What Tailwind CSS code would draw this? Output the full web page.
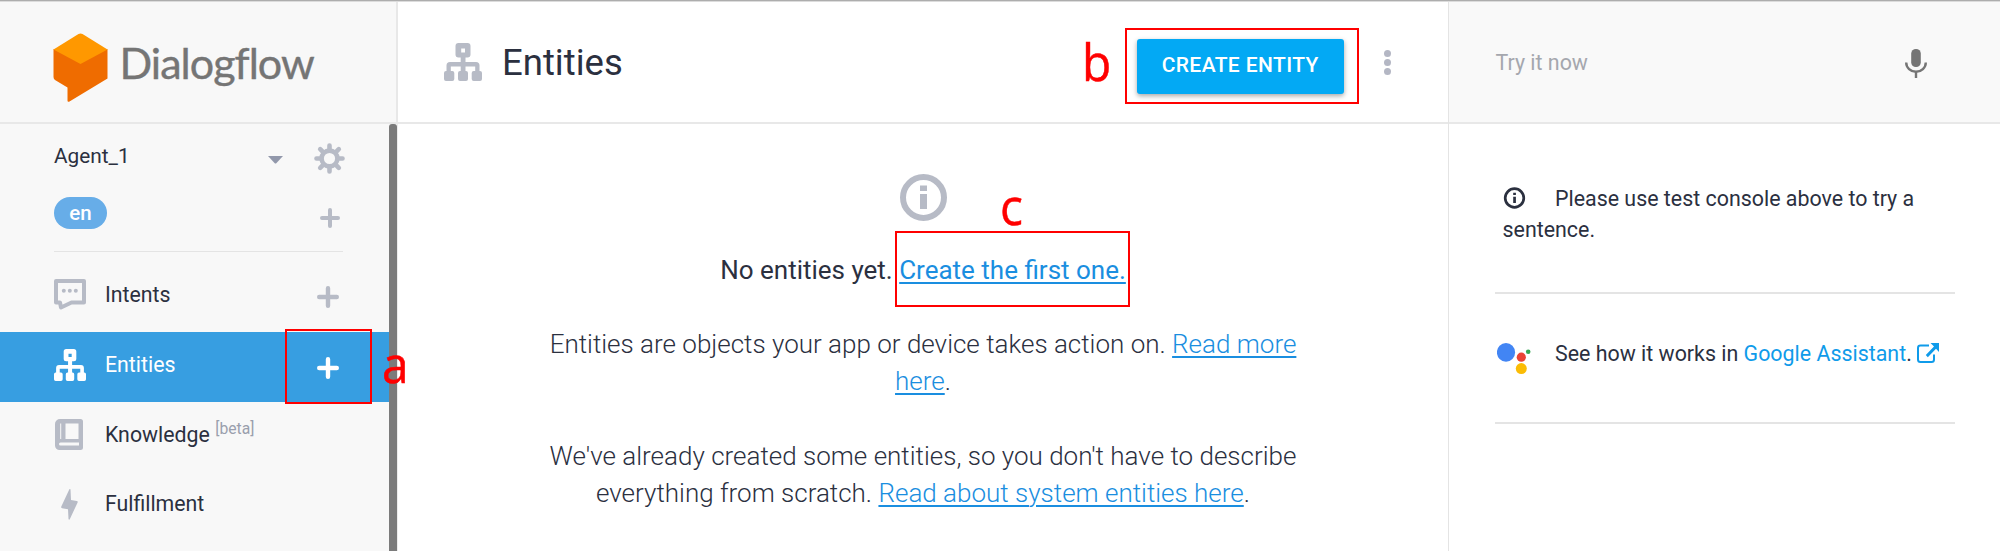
<!DOCTYPE html>
<html lang="en">
<head>
<meta charset="utf-8">
<title>Dialogflow</title>
<script src="https://cdn.jsdelivr.net/npm/@tailwindcss/browser@4"></script>
</head>
<body class="relative flex h-[551px] w-[2000px] flex-col overflow-hidden bg-white font-['Roboto',sans-serif] text-[21.3px] text-[#2b303f]">
<svg class="hidden">
  <symbol id="sitemap" viewBox="0 0 38 38">
    <path fill="currentColor" fill-rule="evenodd" d="M14.500 0h9a3 3 0 0 1 3 3v8.500a3 3 0 0 1-3 3h-2v4.500H32a3.500 3.500 0 0 1 3.500 3.500V28H36a2 2 0 0 1 2 2v6a2 2 0 0 1-2 2h-6.300a2 2 0 0 1-2-2v-6a2 2 0 0 1 2-2h1.500v-4.500h-9.700V28H22a2 2 0 0 1 2 2v6a2 2 0 0 1-2 2h-6a2 2 0 0 1-2-2v-6a2 2 0 0 1 2-2h.7v-4.500H6.800V28h1.500a2 2 0 0 1 2 2v6a2 2 0 0 1-2 2H2a2 2 0 0 1-2-2v-6a2 2 0 0 1 2-2h.5v-5.500A3.500 3.500 0 0 1 6 19h10.700v-4.500h-2.200a3 3 0 0 1-3-3V3a3 3 0 0 1 3-3zM17.200 5.500v4h3.800v-4z"/>
  </symbol>
  <symbol id="plus" viewBox="0 0 22 22"><path d="M11 2.200v17.600M2.200 11h17.600" stroke="currentColor" stroke-width="4.400" stroke-linecap="round" fill="none"/></symbol>
</svg>

<div class="h-px shrink-0 bg-[#adadad]"></div>
<div class="h-px shrink-0 bg-[#dcdcdc]"></div>

<div class="flex min-h-0 flex-1">
  <!-- Sidebar -->
  <aside class="flex w-[398px] shrink-0 flex-col bg-[#f8f8f8]">
    <div class="flex h-[122px] shrink-0 border-r-2 border-b-2 border-[#e8e8e8] pt-[31px] pl-[53px]">
      <svg class="h-[70px] w-[55px]" viewBox="0 0 55 70">
        <path d="M.5 16 27.500 26 54.500 16V45.500L16.500 68.500Q14.500 69.500 14.500 67.500V54.500L2 47Q.5 46 .5 44z" fill="#ef6c00"/>
        <path d="M.5 16.500 25.500 1Q27.500 0 29.500 1L54.500 16.500 27.500 31z" fill="#ff9800"/>
      </svg>
      <span class="mt-[4px] ml-[11.5px] font-['Lato',sans-serif] text-[43px] leading-[52px] tracking-[-0.95px] text-[#757575] [-webkit-text-stroke:0.4px_#757575]">Dialogflow</span>
    </div>
    <div class="flex min-h-0 flex-1">
      <nav class="flex w-[389px] shrink-0 flex-col">
        <div class="mr-[46px] ml-[54px] flex h-[128px] shrink-0 flex-col border-b-[1.5px] border-[#e4e4e4]">
          <div class="flex h-[66px] items-center">
            <span class="w-[214px] shrink-0 text-[20.8px]">Agent_1</span>
            <svg class="mt-[5px] h-[8px] w-[15px] shrink-0" viewBox="0 0 15 8"><path d="M0 0h15L8.500 7q-1 1-2 0z" fill="#9298ab"/></svg>
            <svg class="mt-[2px] ml-[31px] h-[31px] w-[31px] shrink-0" viewBox="-15.500 -15.500 31 31">
              <circle r="7.900" fill="none" stroke="#b7bbc6" stroke-width="4.600"/>
              <path d="M0-9v-4M0 9v4M-9 0h-4M9 0h4M6.600 6.600l2.700 2.700M-6.600-6.600l-2.700-2.700M6.600-6.600l2.700-2.700M-6.600 6.600l-2.700 2.700" stroke="#b7bbc6" stroke-width="4.600" stroke-linecap="round"/>
            </svg>
          </div>
          <div class="flex items-start justify-between pt-[7px]">
            <span class="flex h-[32px] w-[53px] items-center justify-center rounded-full bg-[#67ade8] text-[20.5px] font-medium text-white">en</span>
            <svg class="mt-[10.500px] mr-[3.500px] h-[20px] w-[20px] text-[#b7bbc6]"><use href="#plus"/></svg>
          </div>
        </div>
        <div class="mt-[10px] flex flex-col">
          <a class="flex h-[70px] items-center pr-[50px] pl-[54px]">
            <span class="flex flex-1 items-center pb-[5px]">
              <svg class="mr-[19px] h-[31px] w-[32px]" viewBox="0 0 32 31">
                <path d="M2 2h28v21.500H17.500L7 28.500l-1-5H2z" fill="none" stroke="#b7bbc6" stroke-width="4" stroke-linejoin="round"/>
                <circle cx="9.800" cy="11.800" r="2" fill="#b7bbc6"/><circle cx="15.800" cy="11.800" r="2" fill="#b7bbc6"/><circle cx="21.800" cy="11.800" r="2" fill="#b7bbc6"/>
              </svg>Intents</span>
            <svg class="h-[22px] w-[22px] text-[#b7bbc6]"><use href="#plus"/></svg>
          </a>
          <a class="flex h-[70px] items-center bg-[#379ee1] pr-[50px] pl-[54px] text-white">
            <span class="flex flex-1 items-center pb-[5px]"><svg class="mr-[19px] h-[32px] w-[32px]"><use href="#sitemap"/></svg>Entities</span>
            <svg class="mt-px h-[22px] w-[22px]"><use href="#plus"/></svg>
          </a>
          <a class="flex h-[70px] items-center pb-[5px] pl-[55px]">
            <svg class="mr-[22px] h-[31px] w-[28px]" viewBox="0 0 28 31">
              <path fill="#b7bbc6" fill-rule="evenodd" d="M5 0h20.500A2.500 2.500 0 0 1 28 2.500V28.500A2.500 2.500 0 0 1 25.500 31H4.500A4.500 4.500 0 0 1 0 26.500V5A5 5 0 0 1 5 0zM10.500 4.500V20h13V4.500zM5.200 4.500V20h1V4.500zM5.500 23.500a1.500 1.500 0 0 0 0 3H24v-3z"/>
            </svg>Knowledge<span class="ml-[5.5px] pb-[11px] text-[15.7px] leading-5 text-[#9a9fad]">[beta]</span>
          </a>
          <a class="flex h-[70px] items-center pb-[6px] pl-[61px]">
            <svg class="mr-[27px] h-[31px] w-[17px]" viewBox="0 0 17 31"><path d="M8.500 0 .3 17.500q-.6 1.500.8 1.700l5.900 1L7.500 30q.6 1.500 1.400 0l7.600-16.300q.7-1.500-.8-1.800l-5.700-.9L9.500.3z" fill="#b7bbc6"/></svg>Fulfillment
          </a>
        </div>
      </nav>
      <div class="w-[8px] rounded-t-[3px] bg-[#7b7b7b]"></div>
      <div class="w-px bg-[#ececec]"></div>
    </div>
  </aside>

  <!-- Main column -->
  <main class="flex w-[1050px] shrink-0 flex-col">
    <header class="flex h-[122px] shrink-0 items-center border-b-2 border-[#e8e8e8] pl-[45.5px]">
      <svg class="h-[38px] w-[38px] text-[#b7bbc6]"><use href="#sitemap"/></svg>
      <h1 class="ml-[20.5px] flex-1 pt-px text-[36.5px] leading-[44px]">Entities</h1>
      <button class="mt-[9px] mr-[40.5px] mb-px flex h-[55px] w-[206.5px] items-center justify-center self-center rounded-[3px] bg-[#03a9f4] pb-px text-[21px] font-medium tracking-[0.4px] text-white shadow-[0_2px_5px_rgba(0,0,0,0.35)]">CREATE ENTITY</button>
      <svg class="mr-[57px] h-[25px] w-[7px]" viewBox="0 0 7 25"><circle cx="3.500" cy="3.600" r="3.500" fill="#b4b7c4"/><circle cx="3.500" cy="12.500" r="3.500" fill="#b4b7c4"/><circle cx="3.500" cy="21.400" r="3.500" fill="#b4b7c4"/></svg>
    </header>
    <section class="flex flex-col items-center pt-[49.5px] text-center text-[26px] leading-[37px]">
      <svg class="h-[47px] w-[47px]" viewBox="0 0 47 47"><circle cx="23.500" cy="23.500" r="20.500" fill="none" stroke="#b7bbc6" stroke-width="6"/><path d="M20 11.500h7v5.500h-7zM20 20h7v15h-7z" fill="#b7bbc6"/></svg>
      <p class="mt-[31px]">No entities yet. <a class="text-[#1a8ee0] underline decoration-2 underline-offset-[3px]">Create the first one.</a></p>
      <p class="mt-[37px] font-light">Entities are objects your app or device takes action on. <a class="text-[#1a8ee0] underline decoration-2 underline-offset-[3px]">Read more<br>here</a>.</p>
      <p class="mt-[38px] font-light">We've already created some entities, so you don't have to describe<br>everything from scratch. <a class="text-[#1a8ee0] underline decoration-2 underline-offset-[3px]">Read about system entities here</a>.</p>
    </section>
  </main>

  <!-- Test console -->
  <aside class="flex flex-1 flex-col border-l-[1.5px] border-[#e4e4e4]">
    <div class="flex h-[122px] items-center justify-between border-b-2 border-[#e8e8e8] bg-[#f9f9f9] pr-[73px] pl-[46.5px]">
      <span class="mt-[2px] text-[21.4px] text-[#a5a7ae]">Try it now</span>
      <svg class="mt-[3px] h-[29px] w-[22px]" viewBox="0 0 22 29"><rect x="6.200" y="0" width="9.600" height="18" rx="4.600" fill="#757575"/><path d="M1.200 13.500a9.800 9.300 0 0 0 19.600 0M11 22.500V29" fill="none" stroke="#757575" stroke-width="2.400"/></svg>
    </div>
    <div class="mr-[45px] ml-[46px] flex flex-col text-[21.4px]">
      <div class="h-[170px] border-b-2 border-[#e4e4e4] pt-[60px] pl-[7.5px] leading-[30.7px]">
        <svg class="mr-[29.5px] inline-block h-[22px] w-[23px] align-[-2.500px]" viewBox="0 0 23 22"><circle cx="11.500" cy="11" r="9.300" fill="none" stroke="#2b303f" stroke-width="2.700"/><path d="M10.200 5.700h2.700v2.300h-2.700zM10.200 9.700h2.700v6.300h-2.700z" fill="#2b303f"/></svg>Please use test console above to try a<br>sentence.
      </div>
      <div class="flex h-[130px] items-center border-b-2 border-[#e4e4e4] pb-[8px]">
        <svg class="mt-[9px] ml-[1.5px] h-[32px] w-[34px]" viewBox="0 0 34 32"><ellipse cx="9" cy="9.400" rx="9.100" ry="9.400" fill="#4285f4"/><circle cx="24.300" cy="14.200" r="4.600" fill="#ea4335"/><circle cx="31.200" cy="8.700" r="2.300" fill="#34a853"/><circle cx="24.300" cy="25.600" r="5.500" fill="#fbbc05"/></svg>
        <span class="ml-[24.5px]">See how it works in <a class="text-[#0f9bea]">Google Assistant</a>.</span>
        <svg class="mb-[3px] ml-[5.5px] h-[20px] w-[22px]" viewBox="0 0 22 20"><path d="M12 2.600H3.500Q1 2.600 1 5v11.500Q1 19 3.500 19h11Q17 19 17 16.500V11.500" fill="none" stroke="#0f9bea" stroke-width="2"/><path d="M13.500 0H22v9l-3-3.200-8.200 8.500-2-2.200L17 3.400z" fill="#0f9bea"/></svg>
      </div>
    </div>
  </aside>
</div>

<!-- Step callouts -->
<div class="absolute top-[329px] left-[285px] h-[75px] w-[87px] border-2 border-[#ff0000]"></div>
<div class="absolute top-[28px] left-[1125px] h-[76px] w-[234px] border-2 border-[#ff0000]"></div>
<div class="absolute top-[231px] left-[895px] h-[76px] w-[235px] border-2 border-[#ff0000]"></div>
<span class="absolute top-[333px] left-[382px] origin-left scale-x-92 font-['Open_Sans',sans-serif] text-[52px] leading-[60px] text-[#ff0000] [-webkit-text-stroke:0.5px_#ff0000]">a</span>
<span class="absolute top-[31px] left-[1082px] origin-left scale-x-92 font-['Open_Sans',sans-serif] text-[52px] leading-[60px] text-[#ff0000] [-webkit-text-stroke:0.5px_#ff0000]">b</span>
<span class="absolute top-[175px] left-[1000px] origin-left scale-x-92 font-['Open_Sans',sans-serif] text-[52px] leading-[60px] text-[#ff0000] [-webkit-text-stroke:0.5px_#ff0000]">c</span>
</body>
</html>
